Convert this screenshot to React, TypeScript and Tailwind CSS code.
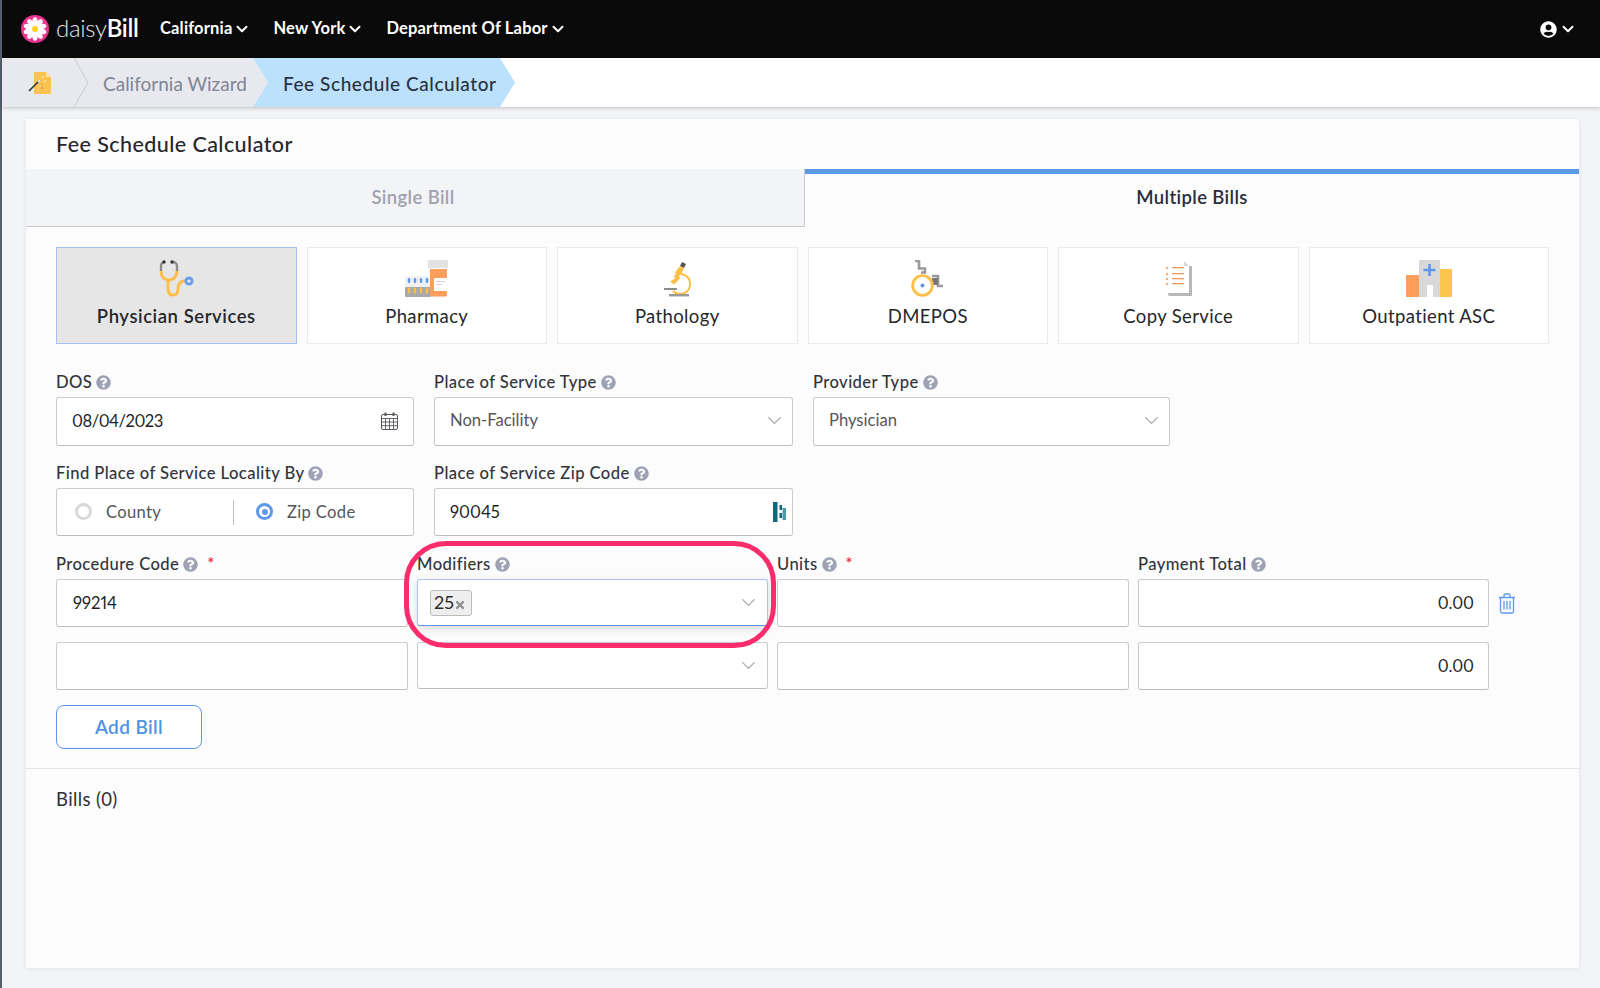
import React from 'react';
import { ChevronDown } from 'lucide-react';
import { FaQuestionCircle, FaTimes, FaUserCircle } from 'react-icons/fa';

const Help = () => <FaQuestionCircle className="inline-block shrink-0 text-[#9ea2b4]" size={15} />;

const Req = () => <span className="ml-[5px] text-[#e5273a]">*</span>;

const Label = ({ text, req }: { text: string; req?: boolean }) => (
  <div className="mb-[5px] flex h-5 items-center gap-[4px] text-[16.6px] font-medium tracking-[0.025em] whitespace-nowrap text-[#33343a]">
    {text} <Help />
    {req && <Req />}
  </div>
);

const Box = ({ children, className = '' }: { children?: React.ReactNode; className?: string }) => (
  <div className={`flex items-center rounded-[3px] border border-[#cbcbcb] border-b-[#bdbdbd] bg-white text-[16.6px] text-[#1f1f1f] proportional-nums ${className}`}>
    {children}
  </div>
);

const SelectChevron = () => <ChevronDown className="ml-auto text-[#a9a9a9]" size={23} strokeWidth={1.4} />;

const Logo = () => (
  <svg width="28" height="28" viewBox="0 0 28 28" className="shrink-0">
    <circle cx="14" cy="14" r="14" fill="#e9338f" />
    {[0, 36, 72, 108, 144, 180, 216, 252, 288, 324].map((a) => (
      <ellipse key={a} cx="14" cy="7.2" rx="2.7" ry="5" fill="#fff" opacity="0.96" transform={`rotate(${a} 14 14)`} />
    ))}
    <circle cx="14" cy="14" r="3" fill="#ffd21f" />
  </svg>
);

const WandNote = () => (
  <svg width="26" height="24" viewBox="0 0 26 24">
    <path d="M6 1h12l5 5v17H6z" fill="#fbc350" />
    <path d="M18 1l5 5h-5z" fill="#fde2a6" />
    <path d="M1 20 12 9" stroke="#333" strokeWidth="1.6" />
    <path d="M10 11l2-2" stroke="#fff" strokeWidth="1.6" />
    <circle cx="15" cy="6" r="0.8" fill="#fff" />
    <circle cx="17" cy="10" r="0.8" fill="#fff" />
    <circle cx="14" cy="17" r="0.8" fill="#9a8a5a" />
    <circle cx="14" cy="13" r="0.8" fill="#b9b56a" />
  </svg>
);

const Stethoscope = () => (
  <svg width="35" height="37" viewBox="0 0 35 37" fill="none">
    <path d="M2 11V6c0-2.5 1.6-4 3.5-4M18 11V6c0-2.5-1.6-4-4.5-4" stroke="#8c8c8c" strokeWidth="2.4" />
    <circle cx="5" cy="2" r="1.7" fill="#333" />
    <circle cx="13" cy="2" r="1.7" fill="#333" />
    <path d="M2 11c0 5 3 9 8 9s8-4 8-9" stroke="#fdbf47" strokeWidth="3" />
    <path d="M9 20v9c0 4 2 6 5 6s5-2 5-6c0-5 2-8 7-8" stroke="#fdbf47" strokeWidth="3" />
    <circle cx="30" cy="21" r="4.6" fill="#6d9eeb" />
    <circle cx="30" cy="21" r="1.6" fill="#e8eefb" />
  </svg>
);

const Pharmacy = () => (
  <svg width="43" height="37" viewBox="0 0 43 37">
    <rect x="0" y="16" width="26" height="12" fill="#f1f1f1" />
    <rect x="0" y="27" width="26" height="10" rx="1" fill="#a9a9a9" />
    {[4, 10, 16, 22].map((x) => (
      <g key={x}>
        <rect x={x - 1.2} y="18" width="2.4" height="5" rx="1.2" fill="#5f97ea" />
        <rect x={x - 1.2} y="27.5" width="2.4" height="6" rx="1.2" fill="#fdbf47" />
      </g>
    ))}
    <rect x="23" y="0" width="20" height="8" fill="#e3e3e3" />
    <path d="M25 9h17v26a1.5 1.5 0 0 1-1.5 1.5H26.5A1.5 1.5 0 0 1 25 35z" fill="#fd9f5b" />
    <rect x="29" y="18" width="14" height="13" fill="#fff" />
    <rect x="31" y="21" width="9" height="1" fill="#d5d5d5" />
    <rect x="31" y="24" width="6" height="1" fill="#d5d5d5" />
  </svg>
);

const Microscope = () => (
  <svg width="27" height="37" viewBox="0 0 27 37" fill="none">
    <path d="M18 2l4 2-2 4-4-2z" fill="#555" />
    <path d="M16 6l4 2.5-3 6-2 1 1 3-6 6-4-3 5-3-1-2 2-3-1-1z" fill="#fdbf47" />
    <path d="M17 14c6 1 9 5 9 10 0 6-4 10-10 10-3 0-5-1-7-3" stroke="#fdbf47" strokeWidth="2" />
    <rect x="0" y="28" width="13" height="2" fill="#8c8c8c" />
    <rect x="5" y="34" width="20" height="2.4" fill="#9a9a9a" />
  </svg>
);

const Wheelchair = () => (
  <svg width="33" height="37" viewBox="0 0 33 37" fill="none">
    <path d="M4 1h4v7.500h6v4h-4" stroke="#9a9a9a" strokeWidth="2.6" />
    <path d="M21 16h6v10h5" stroke="#9a9a9a" strokeWidth="2.6" />
    <rect x="21" y="18" width="6" height="7" fill="#777" />
    <circle cx="11.500" cy="25.500" r="9.800" fill="#fff" stroke="#fdbf47" strokeWidth="2.800" />
    <circle cx="11.500" cy="25.500" r="2" fill="#5f97ea" />
  </svg>
);

const CopyDoc = () => (
  <svg width="27" height="36" viewBox="0 0 27 36">
    <path d="M3 6h24v30H5a2 2 0 0 1-2-2z" fill="#b8b8b8" />
    <path d="M0 1h19l5 5v27H0z" fill="#fff" />
    <path d="M19 1l5 5h-5z" fill="#d9d9d9" />
    {[7, 13, 18, 23].map((y) => (
      <g key={y}>
        <rect x="1" y={y} width="2" height="2" fill="#f6ab77" />
        <rect x="7" y={y} width="12" height="1.300" fill="#f29a5c" />
      </g>
    ))}
  </svg>
);

const Hospital = () => (
  <svg width="46" height="37" viewBox="0 0 46 37">
    <rect x="0" y="15" width="13" height="22" fill="#fd9f5b" />
    <rect x="34" y="9" width="12" height="28" fill="#fdc44e" />
    <rect x="13" y="0" width="21" height="37" fill="#d8d8d8" />
    <rect x="21" y="25" width="6" height="12" fill="#fff" />
    <path d="M23.500 4v12M17.500 10h12" stroke="#5f97ea" strokeWidth="2.600" />
  </svg>
);

const TealMark = () => (
  <svg width="14" height="20" viewBox="0 0 14 20">
    <rect x="0" y="0" width="4.500" height="20" fill="#14667c" />
    <rect x="6.500" y="3" width="2.500" height="5" fill="#14667c" />
    <rect x="6.500" y="11" width="2.500" height="5" fill="#14667c" />
    <rect x="9.500" y="6" width="3.500" height="12" fill="#4b9aa8" />
  </svg>
);

const Trash = () => (
  <svg width="18" height="21" viewBox="0 0 18 21" fill="none" stroke="#5f97ea" strokeWidth="1.300">
    <path d="M1 4.500h16M6 4.500V2.200C6 1.500 6.500 1 7.200 1h3.600c.7 0 1.200.5 1.200 1.200v2.300" />
    <path d="M2.500 4.500v14c0 .9.600 1.500 1.500 1.500h10c.9 0 1.500-.6 1.500-1.500v-14" />
    <path d="M6 8v8.500M9 8v8.500M12 8v8.500" />
  </svg>
);

const CalendarIcon = () => (
  <svg width="17" height="18" viewBox="0 0 17 18" fill="none" stroke="#55565c" className="ml-auto">
    <rect x="0.500" y="2.500" width="16" height="15" rx="1.500" />
    <path d="M0.500 6.500h16M0.500 10h16M0.500 13.700h16M4.500 6.500v11M8.500 6.500v11M12.500 6.500v11" strokeWidth="0.900" />
    <path d="M4.500 0.500v3.500M12.500 0.500v3.500" strokeWidth="2" />
  </svg>
);

const cats = [
  { name: 'Physician Services', icon: <Stethoscope />, active: true },
  { name: 'Pharmacy', icon: <Pharmacy /> },
  { name: 'Pathology', icon: <Microscope /> },
  { name: 'DMEPOS', icon: <Wheelchair /> },
  { name: 'Copy Service', icon: <CopyDoc /> },
  { name: 'Outpatient ASC', icon: <Hospital /> },
];

const navItems = ['California', 'New York', 'Department Of Labor'];

export default function App() {
  return (
    <div className="flex h-[988px] overflow-hidden bg-[#f3f4f7] font-['Lato',sans-serif]">
      <div className="w-[2px] shrink-0 bg-[#55606e]" />
      <div className="flex min-w-0 flex-1 flex-col">
        <header className="flex h-[58px] shrink-0 items-center bg-[#0a0a0a] pr-[23px] pl-[19px] text-white">
          <Logo />
          <div className="-mt-[3px] ml-[7px] w-[104px] text-[24px] leading-none tracking-[-0.3px]">
            <span className="font-light text-[#e4e4e4]">daisy</span>
            <span className="font-semibold">Bill</span>
          </div>
          <nav className="-mt-[2px] flex gap-[22px] text-[16.5px] font-bold tracking-[0.01em]">
            {navItems.map((n) => (
              <div key={n} className="flex items-center gap-[1px] whitespace-nowrap">
                {n}
                <ChevronDown className="mt-[2px]" size={18} strokeWidth={2.6} />
              </div>
            ))}
          </nav>
          <div className="ml-auto flex items-center gap-[2px]">
            <FaUserCircle size={17} />
            <ChevronDown size={18} strokeWidth={2.6} />
          </div>
        </header>

        <div className="flex h-[49px] shrink-0 bg-white shadow-[0_1px_4px_rgba(0,0,0,0.22)]">
          <div className="relative flex w-[266px] items-center bg-[#e8e9ee] text-[19px] text-[#7f8496] [clip-path:polygon(0_0,251px_0,266px_50%,251px_100%,0_100%)]">
            <div className="ml-[26px] w-[46px]">
              <WandNote />
            </div>
            <svg width="16" height="49" viewBox="0 0 16 49" fill="none" className="shrink-0" stroke="#c9cbd3">
              <path d="M0 0l14 24.500L0 49" />
            </svg>
            <span className="mt-[3px] ml-[13px] whitespace-nowrap">California Wizard</span>
          </div>
          <div className="-ml-[15px] flex w-[262px] items-center bg-[#bbe1fd] pt-[3px] pl-[30px] text-[19px] font-medium tracking-[0.03em] whitespace-nowrap text-[#2c3140] [clip-path:polygon(0_0,247px_0,262px_50%,247px_100%,0_100%,15px_50%)]">
            Fee Schedule Calculator
          </div>
        </div>

        <main className="relative mt-[12px] mr-[21px] ml-[24px] h-[849px] bg-[#fcfcfd] shadow-[0_1px_5px_rgba(0,0,0,0.08)]">
          <h1 className="flex h-[50px] items-center pl-[30px] text-[21.5px] font-medium tracking-[0.02em] text-[#26272c]">Fee Schedule Calculator</h1>

          <div className="flex h-[58px] text-[18.5px] font-semibold tracking-[0.02em]">
            <div className="flex w-[779px] items-center justify-center border-r border-b border-[#c9cbd3] bg-[#f3f4f6] pr-[4px] text-[#9ea1b0]">Single Bill</div>
            <div className="flex flex-1 items-center justify-center border-t-[5px] border-[#5a9ae8] pb-[6px] text-[#2b2d3c]">Multiple Bills</div>
          </div>

          <div className="pr-[30px] pl-[30px]">
            <div className="mt-[20px] grid grid-cols-6 gap-[10px]">
              {cats.map((c) => (
                <div
                  key={c.name}
                  className={`flex h-[97px] flex-col items-center border pt-[11px] text-[18.5px] text-[#26272c] ${
                    c.active ? 'border-[#a6c1ec] bg-[#e6e6e6] font-semibold tracking-[0.03em]' : 'border-[#ebebeb] bg-white tracking-[0.02em]'
                  }`}
                >
                  <div className="flex h-[38px] items-center">{c.icon}</div>
                  <div className="mt-[6px] whitespace-nowrap">{c.name}</div>
                </div>
              ))}
            </div>

            <div className="mt-[28px] grid grid-cols-[358px_359px_357px] gap-x-[20px]">
              <div>
                <Label text="DOS" />
                <Box className="h-[49px] px-[15px] pb-[1px] tracking-[-0.03em]">
                  08/04/2023
                  <CalendarIcon />
                </Box>
              </div>
              <div>
                <Label text="Place of Service Type" />
                <Box className="h-[49px] pr-[6px] pb-[2px] pl-[15px] text-[#55565c]">
                  Non-Facility
                  <SelectChevron />
                </Box>
              </div>
              <div>
                <Label text="Provider Type" />
                <Box className="h-[49px] pr-[6px] pb-[2px] pl-[15px] text-[#55565c]">
                  Physician
                  <SelectChevron />
                </Box>
              </div>
            </div>

            <div className="mt-[17px] grid grid-cols-[358px_359px] gap-x-[20px]">
              <div>
                <Label text="Find Place of Service Locality By" />
                <Box className="h-[48px] tracking-[0.02em] text-[#55565c]">
                  <div className="flex w-[176px] items-center pl-[18px]">
                    <span className="h-[17px] w-[17px] rounded-full border-[3px] border-[#d9d9d9] bg-white" />
                    <span className="ml-[14px]">County</span>
                  </div>
                  <div className="h-[25px] w-px bg-[#bdbdbd]" />
                  <div className="flex items-center pl-[22px]">
                    <span className="flex h-[17px] w-[17px] items-center justify-center rounded-full bg-[#5f97ea]">
                      <span className="flex h-[11px] w-[11px] items-center justify-center rounded-full bg-white">
                        <span className="h-[6px] w-[6px] rounded-full bg-[#5f97ea]" />
                      </span>
                    </span>
                    <span className="ml-[14px]">Zip Code</span>
                  </div>
                </Box>
              </div>
              <div>
                <Label text="Place of Service Zip Code" />
                <Box className="h-[48px] justify-between pr-[5px] pl-[15px]">
                  90045
                  <TealMark />
                </Box>
              </div>
            </div>

            <div className="mt-[18px] grid grid-cols-[352px_351px_352px_351px_20px] gap-x-[9px]">
              <div>
                <Label text="Procedure Code" req />
                <Box className="h-[48px] pr-[15px] pl-[16px]">99214</Box>
              </div>
              <div>
                <Label text="Modifiers" />
                <div className="flex h-[47px] items-center rounded-[3px] border border-[#a9c4ef] border-b-[#5a94e6] bg-white pr-[7px] pl-[12px] shadow-[0_3px_9px_rgba(0,0,0,0.13)]">
                  <div className="flex h-[26px] w-[42px] items-center rounded-[3px] border border-[#bcbcbc] bg-[#eeeeee] pl-[3px] text-[18px] text-[#2b2b2b] proportional-nums">
                    25
                    <FaTimes className="mt-[4px] text-[#8f8f8f]" size={12} />
                  </div>
                  <SelectChevron />
                </div>
              </div>
              <div>
                <Label text="Units" req />
                <Box className="h-[48px]" />
              </div>
              <div>
                <Label text="Payment Total" />
                <Box className="h-[48px] justify-end pr-[14px]">0.00</Box>
              </div>
              <div className="flex h-[48px] items-center self-end">
                <Trash />
              </div>

              <Box className="mt-[15px] h-[48px]" />
              <Box className="mt-[15px] h-[47px] pr-[7px]">
                <SelectChevron />
              </Box>
              <Box className="mt-[15px] h-[48px]" />
              <Box className="mt-[15px] h-[48px] justify-end pr-[14px]">0.00</Box>
            </div>

            <button className="mt-[15px] h-[44px] w-[146px] rounded-[8px] border border-[#5f97ea] bg-white text-[19px] font-semibold tracking-[0.02em] text-[#4f93e6]">
              Add Bill
            </button>
          </div>

          <div className="mt-[19px] border-t border-[#e5e5e8] pt-[17px] pl-[30px] text-[18.5px] tracking-[0.02em] text-[#2e2e33]">Bills (0)</div>

          <div className="pointer-events-none absolute top-[422px] left-[378px] h-[107px] w-[372px] rounded-[42px] border-[5px] border-[#fb2c6c]" />
        </main>
      </div>
    </div>
  );
}
